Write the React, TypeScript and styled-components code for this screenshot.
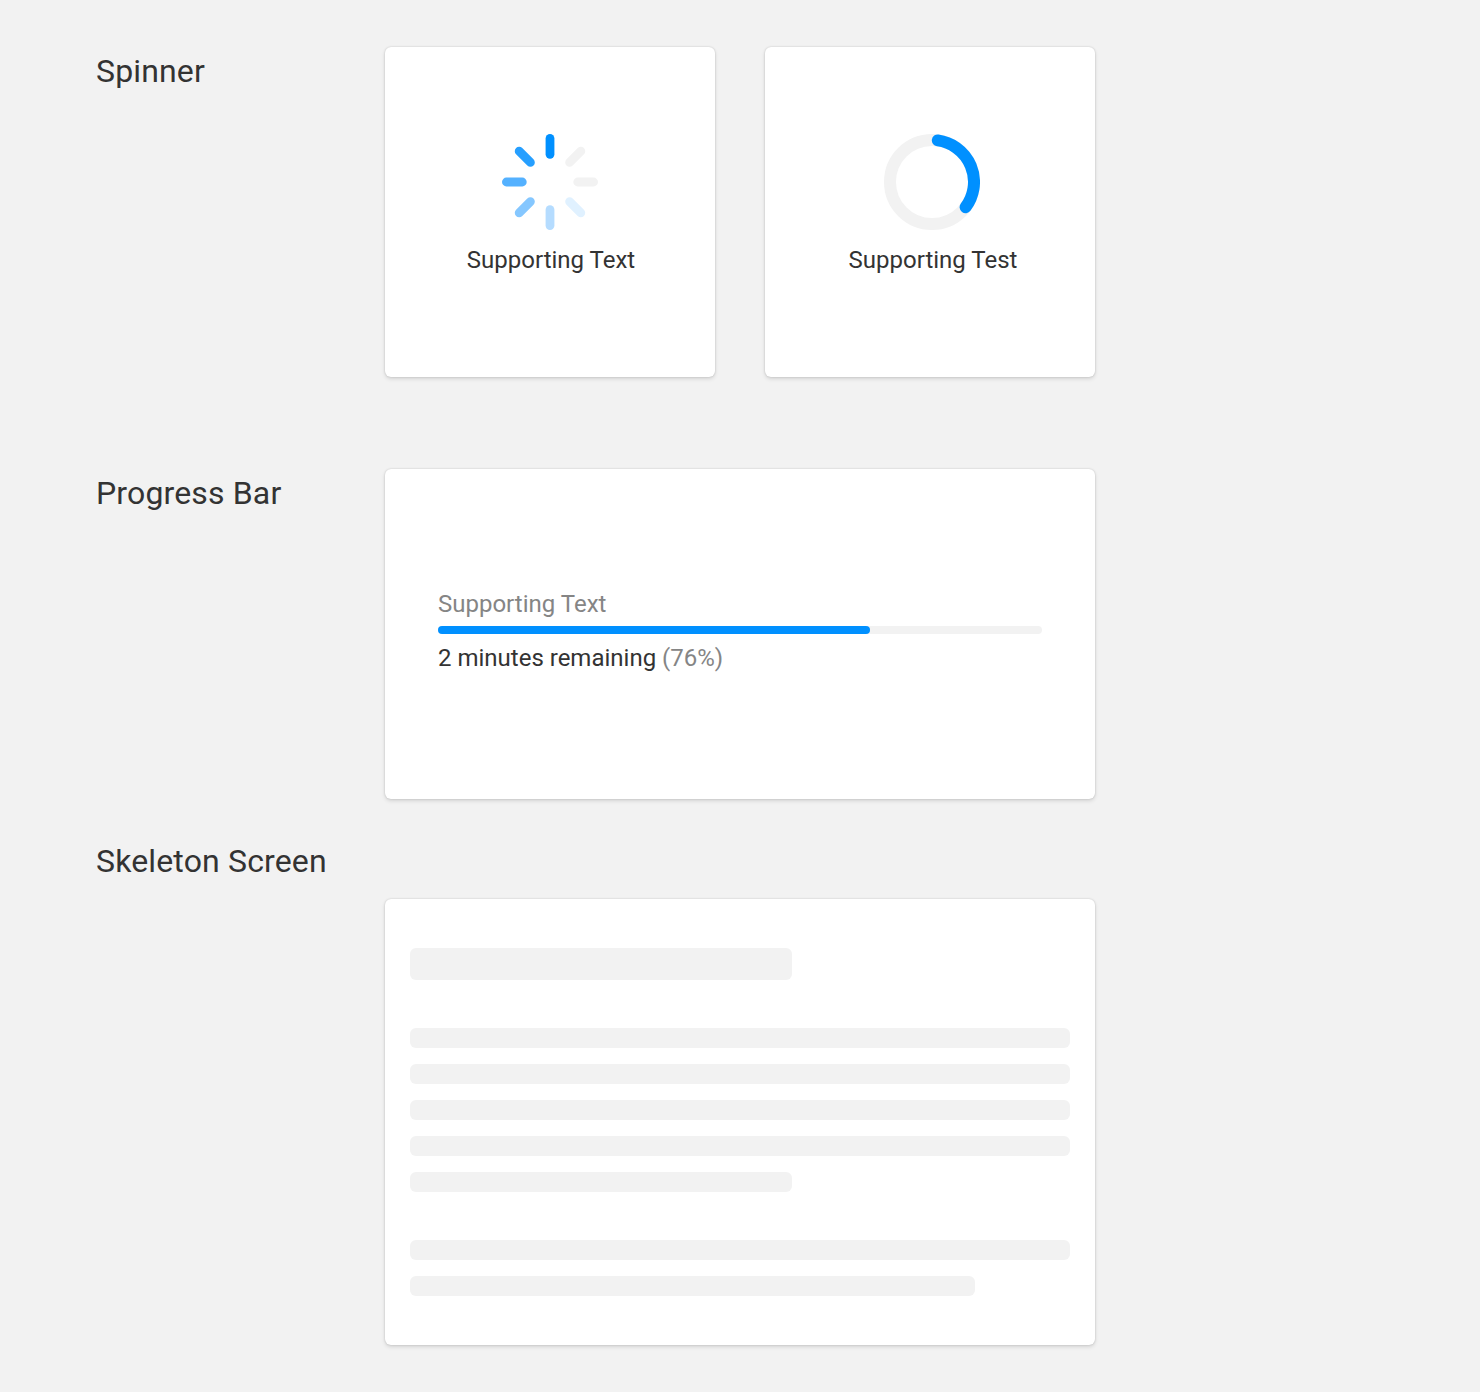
import React from "react";
import styled, { createGlobalStyle } from "styled-components";

const GlobalStyle = createGlobalStyle`
  *, *::before, *::after { box-sizing: border-box; }
  body {
    margin: 0;
    background: #f2f2f2;
    font-family: Roboto, "Liberation Sans", sans-serif;
    color: #333333;
  }
`;

const Page = styled.main`
  width: 1480px;
  height: 1392px;
  padding: 47px 385px 0 96px;
  overflow: hidden;
`;

const Section = styled.section<{ $gap: number; $stacked?: boolean }>`
  display: grid;
  grid-template-columns: ${(p) => (p.$stacked ? "1fr" : "289px 710px")};
  margin-bottom: ${(p) => p.$gap}px;
`;

const Heading = styled.h2`
  margin: 4px 0 0;
  font-size: 32px;
  line-height: 40px;
  height: 40px;
  font-weight: 400;
  letter-spacing: 0.15px;
  white-space: nowrap;
`;

const CardRow = styled.div`
  display: flex;
  gap: 50px;
`;

const Card = styled.div`
  height: 330px;
  border-radius: 6px;
  background: #fff;
  box-shadow: 0 0 2px rgba(0, 0, 0, 0.18), 0 2px 4px rgba(0, 0, 0, 0.12);
`;

const SpinnerCard = styled(Card)<{ $shift: number }>`
  width: 330px;
  display: flex;
  flex-direction: column;
  align-items: center;
  padding: 87px 0 0 ${(p) => p.$shift}px;
`;

const Glyph = styled.svg`
  display: block;
  width: 96px;
  height: 96px;
`;

const Text = styled.p<{ $muted?: boolean }>`
  margin: 0;
  font-size: 24px;
  line-height: 28px;
  white-space: nowrap;
  color: ${(p) => (p.$muted ? "#858585" : "#333333")};
`;

const Caption = styled(Text)<{ $nudge: number }>`
  margin-top: 16px;
  padding-left: ${(p) => p.$nudge}px;
`;

const Muted = styled.span`
  color: #858585;
`;

const ProgressCard = styled(Card)`
  padding: 121px 53px 0;
`;

const Track = styled.div`
  height: 8px;
  margin: 8px 0 10px;
  border-radius: 4px;
  background: #f2f2f2;
`;

const Fill = styled.div<{ $width: number }>`
  width: ${(p) => p.$width}px;
  height: 100%;
  border-radius: 4px;
  background: #0090ff;
`;

const SkeletonCard = styled(Card)`
  width: 710px;
  height: 446px;
  margin: 18px 0 0 289px;
  padding: 49px 25px;
  display: flex;
  flex-direction: column;
  gap: 48px;
`;

const Paragraph = styled.div`
  display: flex;
  flex-direction: column;
  gap: 16px;
`;

const Bone = styled.div<{ $width: number; $height?: number }>`
  width: ${(p) => p.$width}px;
  height: ${(p) => p.$height ?? 20}px;
  border-radius: 6px;
  background: #f2f2f2;
`;

const spokes = ["#0090ff", "#f2f2f2", "#f2f2f2", "#e0f1ff", "#b5dcff", "#85c7ff", "#54b1ff", "#269fff"];

const SpokeSpinner = () => (
  <Glyph viewBox="0 0 96 96">
    {spokes.map((color, i) => (
      <rect
        key={i}
        x="43.6"
        y="0"
        width="8.8"
        height="24.7"
        rx="4.4"
        fill={color}
        transform={`rotate(${i * 45} 48 48)`}
      />
    ))}
  </Glyph>
);

const RingSpinner = () => (
  <Glyph viewBox="0 0 96 96" fill="none" strokeWidth="12">
    <circle cx="48" cy="48" r="42" stroke="#f2f2f2" />
    <path d="M53.8 6.4A42 42 0 0 1 81.6 73.2" stroke="#0090ff" strokeLinecap="round" />
  </Glyph>
);

export default function App() {
  return (
    <>
      <GlobalStyle />
      <Page>
        <Section $gap={92}>
          <Heading>Spinner</Heading>
          <CardRow>
            <SpinnerCard $shift={0}>
              <SpokeSpinner />
              <Caption $nudge={2}>Supporting Text</Caption>
            </SpinnerCard>
            <SpinnerCard $shift={4}>
              <RingSpinner />
              <Caption $nudge={2}>Supporting Test</Caption>
            </SpinnerCard>
          </CardRow>
        </Section>
        <Section $gap={38}>
          <Heading>Progress Bar</Heading>
          <ProgressCard>
            <Text $muted>Supporting Text</Text>
            <Track>
              <Fill $width={431.5} />
            </Track>
            <Text>
              2 minutes remaining <Muted>(76%)</Muted>
            </Text>
          </ProgressCard>
        </Section>
        <Section $gap={0} $stacked>
          <Heading>Skeleton Screen</Heading>
          <SkeletonCard>
            <Bone $width={382} $height={32} />
            <Paragraph>
              <Bone $width={660} />
              <Bone $width={660} />
              <Bone $width={660} />
              <Bone $width={660} />
              <Bone $width={382} />
            </Paragraph>
            <Paragraph>
              <Bone $width={660} />
              <Bone $width={564.6} />
            </Paragraph>
          </SkeletonCard>
        </Section>
      </Page>
    </>
  );
}
